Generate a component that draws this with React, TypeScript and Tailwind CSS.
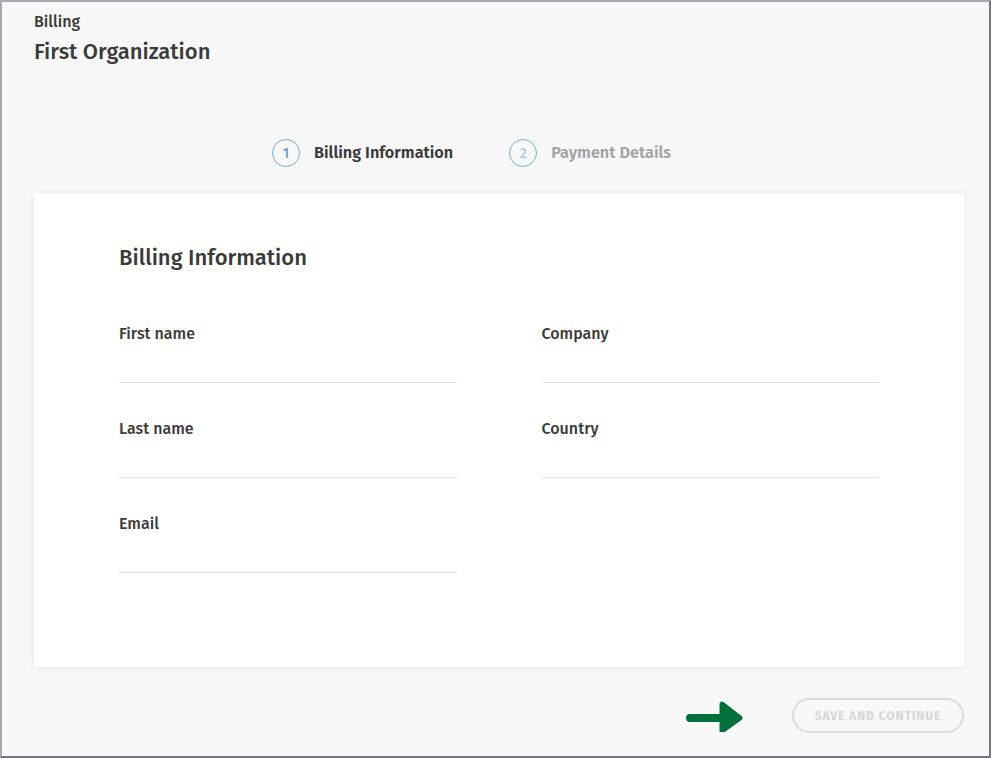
const font = { fontFamily: '"Fira Sans", "Open Sans", "Noto Sans", sans-serif' };

function Field({ label }: { label: string }) {
    return (
        <div className="flex flex-col">
            <label className="pt-[1px] text-[16px] leading-5 font-medium text-[#3b3b3b]">{label}</label>
            <input className="h-[39px] border-b border-[#e2e2e2] outline-none bg-transparent" />
        </div>
    );
}

function Step({ n, label, active }: { n: number; label: string; active?: boolean }) {
    return (
        <div className="flex items-center gap-[14px]">
            <div
                className={`w-[28px] h-[28px] rounded-full border border-[#6eb1df] flex items-center justify-center text-[14px] font-medium ${
                    active ? 'text-[#5aa2d6]' : 'text-[#a8cdea]'
                }`}
            >
                {n}
            </div>
            <span className={`text-[16.3px] font-semibold ${active ? 'text-[#3a3a3a]' : 'text-[#a3a3a3]'}`}>{label}</span>
        </div>
    );
}

export default function App() {
    return (
        <div
            style={font}
            className="w-[991px] h-[758px] box-border border-2 border-t-[#a9a8b0] border-l-[#a9a8b0] border-r-[#77767e] border-b-[#77767e] bg-[#f8f8f8] pl-[32px] pr-[25px] flex flex-col"
        >
            <div className="mt-[10px] text-[16px] leading-5 font-medium text-[#3a3a3a]">Billing</div>
            <h1 className="mt-[5px] text-[22px] leading-[30px] font-medium text-[#3a3a3a]">First Organization</h1>

            <div className="mt-[72px] ml-[238px] flex items-center gap-[56px]">
                <Step n={1} label="Billing Information" active />
                <Step n={2} label="Payment Details" />
            </div>

            <div className="mt-[26px] h-[474px] bg-white shadow-[0_1px_8px_rgba(0,0,0,0.07)] px-[85px] pt-[50px]">
                <h2 className="text-[22px] leading-[30px] font-medium text-[#3a3a3a]">Billing Information</h2>
                <div className="mt-[50px] grid grid-cols-2 gap-x-[85px] gap-y-[35px]">
                    <Field label="First name" />
                    <Field label="Company" />
                    <Field label="Last name" />
                    <Field label="Country" />
                    <Field label="Email" />
                </div>
            </div>

            <div className="mt-[31px] flex items-center justify-end gap-[49px]">
                <svg width="58" height="32" viewBox="0 0 58 32" className="mt-[1px]">
                    <path d="M5 18 H44" stroke="#02703a" strokeWidth="8" strokeLinecap="round" />
                    <path d="M37 4 L55 18 L37 31 Z" fill="#02703a" stroke="#02703a" strokeWidth="5" strokeLinejoin="round" />
                </svg>
                <button className="h-[35px] w-[172px] rounded-full border-2 border-[#dcdce0] text-[12px] font-bold tracking-[0.08em] text-[#d6d6db]">
                    SAVE AND CONTINUE
                </button>
            </div>
        </div>
    );
}
